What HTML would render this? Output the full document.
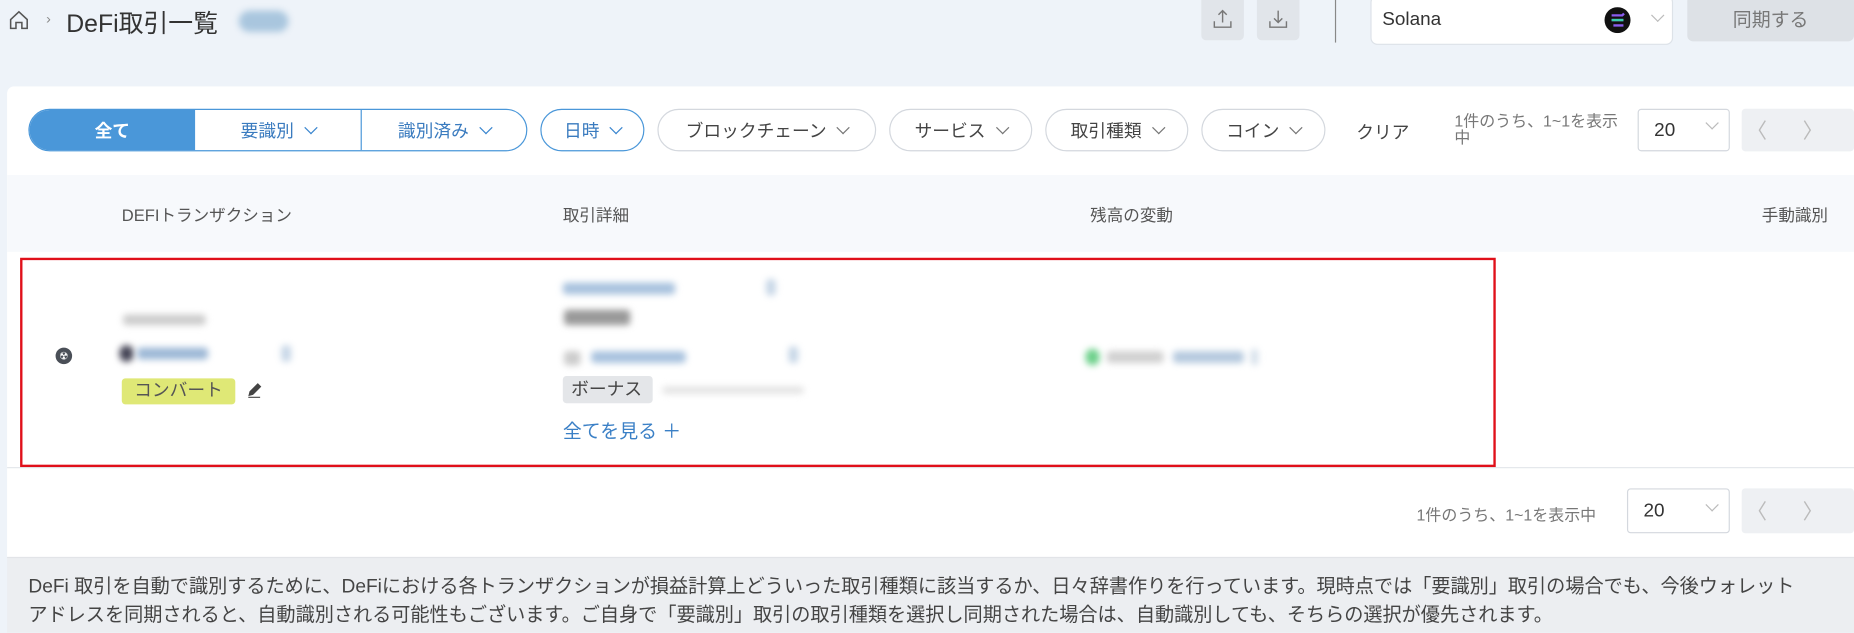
<!DOCTYPE html>
<html><head><meta charset="utf-8"><style>
*{box-sizing:border-box;margin:0;padding:0}
html,body{width:1854px;height:633px;overflow:hidden;background:#eef3f9}
#w{position:absolute;left:0;top:0;width:1568px;height:535px;transform:scale(1.18240);transform-origin:0 0;font-family:"Liberation Sans","Noto Sans CJK JP",sans-serif;color:#333}
.a{position:absolute}
.pill{position:absolute;top:92px;height:36px;border:1px solid #d4d8de;border-radius:18px;background:#fff;display:flex;align-items:center;justify-content:center;font-size:15px;color:#444;gap:6px}
.chev{display:inline-block;width:8px;height:8px;border-right:1.3px solid #777;border-bottom:1.3px solid #777;transform:rotate(45deg);margin-top:-5px;margin-left:4px}
.blue .chev{border-color:#3a86cf}
.blur{position:absolute;filter:blur(3px);border-radius:3px}
</style></head><body><div id="w">
<svg class="a" style="left:7px;top:8px" width="18" height="18" viewBox="0 0 18 18"><path d="M2 8.5L9 2l7 6.5V16h-4.5v-5h-5v5H2z" fill="none" stroke="#555" stroke-width="1.3"/></svg>
<div class="a" style="left:39px;top:9px;font-size:12px;color:#888">›</div>
<div class="a" style="left:56px;top:4px;font-size:21px;color:#333">DeFi取引一覧</div>
<div class="blur" style="left:202px;top:9px;width:42px;height:18px;background:#a9c6de;border-radius:9px"></div>
<div class="a" style="left:1016px;top:0;width:36px;height:34px;background:#e1e5ea;border-radius:0 0 4px 4px"></div>
<svg class="a" style="left:1025px;top:7px" width="18" height="18" viewBox="0 0 18 18" fill="none" stroke="#777" stroke-width="1.2"><path d="M9 12V2M5.5 5.5L9 2l3.5 3.5M2 11v5h14v-5"/></svg>
<div class="a" style="left:1063px;top:0;width:36px;height:34px;background:#e1e5ea;border-radius:0 0 4px 4px"></div>
<svg class="a" style="left:1072px;top:7px" width="18" height="18" viewBox="0 0 18 18" fill="none" stroke="#777" stroke-width="1.2"><path d="M9 2v10M5.5 8.5L9 12l3.5-3.5M2 11v5h14v-5"/></svg>
<div class="a" style="left:1129px;top:0;width:1px;height:36px;background:#888"></div>
<div class="a" style="left:1159px;top:-4px;width:256px;height:42px;background:#fff;border:1px solid #dde2e8;border-radius:6px"></div>
<div class="a" style="left:1169px;top:8px;font-size:16px;color:#333">Solana</div>
<svg class="a" style="left:1357px;top:6px" width="22" height="22" viewBox="0 0 22 22"><circle cx="11" cy="11" r="11" fill="#111"/><path d="M6 7h9l1.5-1.5M6 11h10M7.5 15.5H16" stroke="#8a5cf0" stroke-width="2"/><path d="M6 11h10" stroke="#3ad0b0" stroke-width="2"/></svg>
<span class="a chev" style="left:1394px;top:14px;border-color:#bbb"></span>
<div class="a" style="left:1427px;top:-4px;width:141px;height:39px;background:#dde1e6;border-radius:5px;font-size:16px;color:#777;text-align:center;line-height:43px">同期する</div>
<div class="a" style="left:6px;top:73px;width:1562px;height:400px;background:#fff;border-radius:6px 0 0 0"></div>
<div class="a" style="left:24px;top:92px;width:422px;height:36px;border:1px solid #4a97d9;border-radius:18px;overflow:hidden;display:flex;font-size:15px">
<div style="width:140px;background:#4a97d9;color:#fff;display:flex;align-items:center;justify-content:center;font-weight:bold">全て</div>
<div class="blue" style="width:141px;border-right:1px solid #4a97d9;color:#3a7bbf;display:flex;align-items:center;justify-content:center;gap:6px">要識別<span class="chev"></span></div>
<div class="blue" style="flex:1;color:#3a7bbf;display:flex;align-items:center;justify-content:center;gap:6px">識別済み<span class="chev"></span></div></div>
<div class="pill blue" style="left:457px;width:88px;border-color:#4a97d9;color:#3a7bbf">日時<span class="chev"></span></div>
<div class="pill" style="left:556px;width:185px">ブロックチェーン<span class="chev"></span></div>
<div class="pill" style="left:752px;width:121px">サービス<span class="chev"></span></div>
<div class="pill" style="left:884px;width:121px">取引種類<span class="chev"></span></div>
<div class="pill" style="left:1016px;width:105px">コイン<span class="chev"></span></div>
<div class="a" style="left:1147px;top:101px;font-size:15px;color:#444">クリア</div>
<div class="a" style="left:1230px;top:96px;font-size:13.5px;color:#777;line-height:14px;width:140px">1件のうち、1~1を表示中</div>
<div class="a" style="left:1385px;top:92px;width:78px;height:36px;border:1px solid #d4d8de;border-radius:3px;font-size:16px;padding:9px 0 0 13px">20</div>
<span class="a chev" style="left:1440px;top:105px;border-color:#bbb"></span>
<div class="a" style="left:1473px;top:92px;width:95px;height:36px;background:#eef0f3;border-radius:3px"></div>
<svg class="a" style="left:1473px;top:92px" width="95" height="36" fill="none" stroke="#bbb" stroke-width="1.2"><path d="M20 10l-5 8 5 8M53 10l5 8-5 8"/></svg>
<div class="a" style="left:6px;top:148px;width:1562px;height:65px;background:#f7f9fc"></div>
<div class="a" style="left:103px;top:172px;font-size:14px;color:#555">DEFIトランザクション</div>
<div class="a" style="left:476px;top:172px;font-size:14px;color:#555">取引詳細</div>
<div class="a" style="left:922px;top:172px;font-size:14px;color:#555">残高の変動</div>
<div class="a" style="left:1490px;top:172px;font-size:14px;color:#555">手動識別</div>
<div class="a" style="left:6px;top:395px;width:1562px;height:1px;background:#e4e7eb"></div>
<div class="a" style="left:17px;top:218px;width:1248px;height:177px;border:2px solid #e0101a"></div>
<div class="a" style="left:47px;top:294px;width:14px;height:14px;border-radius:50%;background:#4a4f57;color:#fff;font-size:9px;text-align:center;line-height:14px">☢</div>
<div class="blur" style="left:104px;top:266px;width:70px;height:9px;background:#ccc"></div>
<div class="blur" style="left:101px;top:292px;width:12px;height:14px;background:#445;border-radius:6px"></div>
<div class="blur" style="left:116px;top:294px;width:60px;height:10px;background:#9db8d6"></div>
<div class="blur" style="left:238px;top:292px;width:8px;height:14px;background:#c5d5e6"></div>
<div class="a" style="left:103px;top:320px;width:96px;height:22px;background:#dfe876;border-radius:3px;font-size:15px;color:#555;text-align:center;line-height:22px">コンバート</div>
<svg class="a" style="left:207px;top:322px" width="16" height="16" viewBox="0 0 16 16"><path d="M3 13l1-4 7-7 3 3-7 7z" fill="#444"/><path d="M3 14h10" stroke="#444"/></svg>
<div class="blur" style="left:476px;top:239px;width:95px;height:10px;background:#a8c2de"></div>
<div class="blur" style="left:648px;top:236px;width:8px;height:14px;background:#c5d5e6"></div>
<div class="blur" style="left:477px;top:262px;width:56px;height:13px;background:#999"></div>
<div class="blur" style="left:477px;top:297px;width:14px;height:12px;background:#ccc"></div>
<div class="blur" style="left:500px;top:297px;width:80px;height:10px;background:#a8c2de"></div>
<div class="blur" style="left:667px;top:293px;width:8px;height:14px;background:#c5d5e6"></div>
<div class="a" style="left:476px;top:318px;width:76px;height:23px;background:#e4e6e9;border-radius:3px;font-size:15px;color:#444;padding-left:7px;line-height:23px">ボーナス</div>
<div class="blur" style="left:560px;top:327px;width:120px;height:6px;background:#e2e2e2"></div>
<div class="a" style="left:476px;top:351px;font-size:16px;color:#3b80c6">全てを見る ＋</div>
<div class="blur" style="left:918px;top:295px;width:12px;height:14px;background:#6cd08a;border-radius:6px"></div>
<div class="blur" style="left:936px;top:297px;width:48px;height:10px;background:#d0d0d0"></div>
<div class="blur" style="left:992px;top:297px;width:60px;height:10px;background:#b5c9de"></div>
<div class="blur" style="left:1058px;top:295px;width:6px;height:14px;background:#d2dee9"></div>
<div class="a" style="left:1198px;top:424px;font-size:13.5px;color:#777;width:170px;white-space:nowrap">1件のうち、1~1を表示中</div>
<div class="a" style="left:1376px;top:413px;width:87px;height:38px;border:1px solid #d4d8de;border-radius:3px;font-size:16px;padding:10px 0 0 13px">20</div>
<span class="a chev" style="left:1440px;top:428px;border-color:#bbb"></span>
<div class="a" style="left:1473px;top:413px;width:95px;height:38px;background:#eef0f3;border-radius:3px"></div>
<svg class="a" style="left:1473px;top:414px" width="95" height="36" fill="none" stroke="#bbb" stroke-width="1.2"><path d="M20 10l-5 8 5 8M53 10l5 8-5 8"/></svg>
<div class="a" style="left:6px;top:471px;width:1562px;height:64px;background:#eceef1;border-top:1px solid #e2e4e8"></div>
<div class="a" style="left:24px;top:484px;font-size:16.2px;color:#444;line-height:24px;width:1544px;white-space:nowrap">DeFi 取引を自動で識別するために、DeFiにおける各トランザクションが損益計算上どういった取引種類に該当するか、日々辞書作りを行っています。現時点では「要識別」取引の場合でも、今後ウォレット<br>アドレスを同期されると、自動識別される可能性もございます。ご自身で「要識別」取引の取引種類を選択し同期された場合は、自動識別しても、そちらの選択が優先されます。</div>
</div></body></html>
